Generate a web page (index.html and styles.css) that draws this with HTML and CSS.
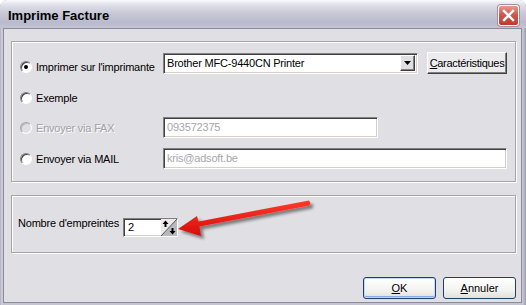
FILE: index.html
```html
<!DOCTYPE html>
<html>
<head>
  <title>Imprime Facture</title>
  <link rel="stylesheet" href="styles.css">
</head>
<body>
  <div class="window">
    <div class="titlebar">
      <span class="title">Imprime Facture</span>
      <span class="close-btn">
        <svg width="13" height="13" viewBox="0 0 13 13">
          <path d="M2 2 L11 11 M11 2 L2 11" stroke="#fff" stroke-width="2.4" stroke-linecap="square" fill="none"/>
        </svg>
      </span>
    </div>

    <div class="client">
      <div class="group group-print">
        <div class="row row-1">
          <label class="opt opt-first"><span class="radio checked"></span>Imprimer sur l'imprimante</label>
          <div class="combo">
            <span class="combo-text">Brother MFC-9440CN Printer</span>
            <span class="combo-btn">
              <svg width="7" height="4" viewBox="0 0 7 4"><path d="M0 0 H7 L3.5 4 Z" fill="#000"/></svg>
            </span>
          </div>
          <button class="btn-classic" type="button"><u>C</u>aractéristiques</button>
        </div>
        <div class="row row-2">
          <label class="opt"><span class="radio"></span>Exemple</label>
        </div>
        <div class="row row-3">
          <label class="opt disabled"><span class="radio"></span>Envoyer via FAX</label>
          <div class="field field-fax">093572375</div>
        </div>
        <div class="row row-4">
          <label class="opt"><span class="radio"></span>Envoyer via MAIL</label>
          <div class="field field-mail">kris@adsoft.be</div>
        </div>
      </div>

      <div class="group group-copies">
        <span class="copies-label">Nombre d'empreintes</span>
        <div class="spin">
          <span class="spin-text">2</span>
          <span class="spin-btn">
            <svg width="16" height="17" viewBox="0 0 16 17">
              <polygon points="0,0 16,0 0,17" fill="#ecebe8"/>
              <polygon points="16,0 16,17 0,17" fill="#b9b8bd"/>
              <line x1="0" y1="17" x2="16" y2="0" stroke="#55555c" stroke-width="1"/>
              <path d="M4.5 1.5 L1.5 5 H3.5 V8 H5.5 V5 H7.5 Z" fill="#000"/>
              <path d="M11.5 15.5 L8.5 12 H10.5 V9 H12.5 V12 H14.5 Z" fill="#000"/>
            </svg>
          </span>
        </div>
      </div>

      <div class="actions">
        <button class="btn btn-default" type="button"><u>O</u>K</button>
        <button class="btn" type="button"><u>A</u>nnuler</button>
      </div>
    </div>

    <svg class="pointer" width="160" height="60" viewBox="0 0 160 60">
      <defs>
        <filter id="shade" x="-10%" y="-30%" width="130%" height="170%">
          <feDropShadow dx="3" dy="3" stdDeviation="1.8" flood-color="#000" flood-opacity="0.45"/>
        </filter>
        <linearGradient id="red" x1="0" y1="0" x2="0" y2="1">
          <stop offset="0" stop-color="#ff3a2a"/>
          <stop offset="1" stop-color="#d40d08"/>
        </linearGradient>
      </defs>
      <polygon filter="url(#shade)" fill="url(#red)"
        points="8,34 27,21 28.5,26.5 139,5.5 140.5,8 139.5,10.5 29.5,31.5 31,41"/>
    </svg>
  </div>
</body>
</html>
```

FILE: styles.css
```css
/* Imprime Facture dialog */

html, body {
    margin: 0;
    padding: 0;
}

body {
    width: 526px;
    height: 305px;
    background: #fff;
    font-family: "Liberation Sans", Arial, sans-serif;
    font-size: 11px;
    letter-spacing: -0.2px;
    color: #000;
}

.window {
    position: relative;
    width: 526px;
    height: 305px;
    box-sizing: border-box;
    display: flex;
    flex-direction: column;
    background: linear-gradient(90deg, #9b9bae 0, #d0d0dc 1px, #c4c4d2 3px, #c4c4d2 calc(100% - 3px), #9b9bae 100%);
    border-radius: 7px 7px 0 0;
    overflow: hidden;
}

.titlebar {
    height: 28px;
    flex: none;
    display: flex;
    align-items: center;
    justify-content: space-between;
    padding: 0 7px 0 8px;
    background: linear-gradient(#fbfbfd 0%, #e3e3ec 15%, #cacad9 45%, #b9bacc 80%, #c3c4d4 100%);
    border-radius: 7px 7px 0 0;
}

.title {
    font-weight: bold;
    font-size: 13px;
    letter-spacing: 0;
    margin-top: 2px;
    color: #000;
}

.close-btn {
    width: 21px;
    height: 21px;
    box-sizing: border-box;
    display: flex;
    align-items: center;
    justify-content: center;
    border: 1px solid #fff;
    border-radius: 3px;
    background: linear-gradient(#ea9a8d, #d0584c 45%, #bd3b31);
    box-shadow: 0 0 0 1px #a98f95;
    margin-top: 2px;
}

.client {
    flex: 1;
    margin: 0 4px 2px 3px;
    border: 1px solid #8b8b9b;
    background: #e0dfe3;
    padding: 12px 5px 0 7px;
    display: flex;
    flex-direction: column;
}

.group {
    border: 1px solid #a5a5ad;
    box-shadow: inset 1px 1px #fff, 1px 1px #fff;
}

.group-print {
    padding: 10px 7px 12px 8px;
}

.row {
    height: 22px;
    display: flex;
    align-items: center;
}

.row-2 {
    margin-top: 12px;
}

.row-3 {
    margin-top: 8px;
}

.row-4 {
    margin-top: 9px;
}

.opt {
    width: 143px;
    flex: none;
    display: flex;
    align-items: center;
    margin-top: 2px;
    white-space: nowrap;
}

.opt-first {
    margin-top: 7px;
}

.opt.disabled {
    color: #a1a1a5;
    text-shadow: 1px 1px #fff;
}

.radio {
    width: 12px;
    height: 12px;
    flex: none;
    box-sizing: border-box;
    margin-right: 4px;
    border-radius: 50%;
    border: 1px solid;
    border-color: #808080 #fff #fff #808080;
    box-shadow: inset 1px 1px #404040;
    background: #fff;
    display: flex;
    align-items: center;
    justify-content: center;
}

.radio.checked::after {
    content: '';
    width: 4px;
    height: 4px;
    border-radius: 50%;
    background: #000;
}

.disabled .radio {
    background: #e0dfe3;
    border-color: #a8a8ad #fff #fff #a8a8ad;
    box-shadow: inset 1px 1px #b8b8bd;
}

.combo,
.field,
.spin {
    box-sizing: border-box;
    border: 1px solid;
    border-color: #808080 #fff #fff #808080;
    box-shadow: inset 1px 1px #404040, inset -1px -1px #d4d0c8;
    background: #fff;
    display: flex;
    align-items: center;
}

.combo {
    width: 255px;
    height: 21px;
    padding: 0 2px 0 3px;
    justify-content: space-between;
}

.combo-btn {
    width: 15px;
    height: 16px;
    box-sizing: border-box;
    display: flex;
    align-items: center;
    justify-content: center;
    background: #e0dfe3;
    border: 1px solid;
    border-color: #fff #404040 #404040 #fff;
    box-shadow: inset -1px -1px #808080;
}

.btn-classic {
    margin-left: 9px;
    width: 80px;
    height: 22px;
    padding: 0;
    font: inherit;
    letter-spacing: -0.3px;
    white-space: nowrap;
    color: #000;
    background: #ececef;
    border: 1px solid;
    border-color: #fff #404040 #404040 #fff;
    box-shadow: inset -1px -1px #808080;
}

.field {
    height: 21px;
    padding-left: 3px;
    color: #a6a6aa;
}

.field-fax {
    width: 215px;
}

.field-mail {
    width: 344px;
}

.group-copies {
    margin-top: 13px;
    height: 58px;
    box-sizing: border-box;
    padding: 0 0 0 6px;
    display: flex;
    align-items: center;
}

.copies-label {
    width: 105px;
    flex: none;
    white-space: nowrap;
    margin-bottom: 3px;
}

.spin {
    width: 55px;
    height: 19px;
    margin-top: 6px;
    padding: 0 0 0 4px;
    justify-content: space-between;
}

.spin-btn {
    display: flex;
    width: 16px;
    height: 17px;
}

.actions {
    margin-top: 24px;
    display: flex;
    justify-content: flex-end;
    gap: 7px;
}

.btn {
    width: 73px;
    height: 22px;
    padding: 0;
    font: inherit;
    color: #000;
    border: 1px solid #1f3f6b;
    border-radius: 3px;
    background: linear-gradient(#ffffff, #f3f3f0 60%, #e2e0da);
}

.btn-default {
    box-shadow: inset 0 0 0 1px #c6d8f6, inset 0 -1px 0 1px #8aa6e3;
}

.pointer {
    position: absolute;
    left: 170px;
    top: 195px;
    pointer-events: none;
}
```
